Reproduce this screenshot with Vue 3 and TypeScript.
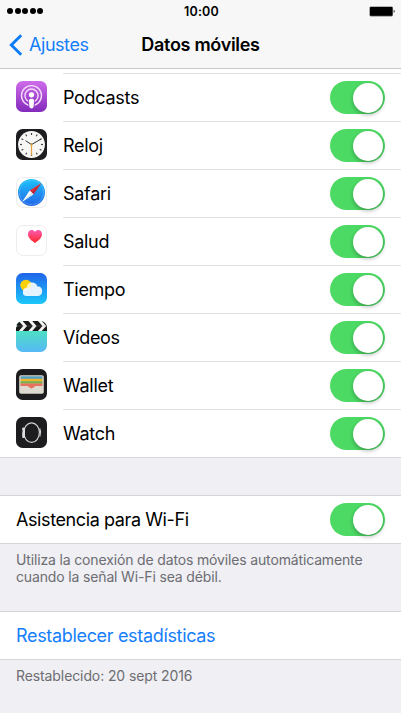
<template>
  <div class="settings-page">
    <header class="top-bar">
      <div class="status-bar">
        <div class="signal">
          <span v-for="n in 5" :key="n" class="signal-dot"></span>
        </div>
        <span class="clock">10:00</span>
        <svg class="battery" viewBox="0 0 27 11">
          <rect x="0.4" y="0.4" width="23.6" height="10" rx="1.4" fill="#777" />
          <rect x="1" y="1" width="22.4" height="8.8" rx="0.8" fill="#000" />
          <path d="M24.7 3.8c1.3.3 1.3 2.9 0 3.2z" fill="#222" />
        </svg>
      </div>
      <nav class="nav-bar">
        <button class="back-btn">
          <svg class="chevron" viewBox="0 0 14 22">
            <path d="M12.2 1.2 2.3 11l9.9 9.8" fill="none" stroke="#0b7cf5" stroke-width="2.9" />
          </svg>
          <span class="back-text">Ajustes</span>
        </button>
        <h1 class="title">Datos móviles</h1>
      </nav>
    </header>

    <!-- Apps -->
    <ul class="app-list">
      <li v-for="app in apps" :key="app.id" class="app-row">
        <svg class="app-icon" viewBox="0 0 31 31">
          <defs>
            <clipPath :id="`clip-${app.id}`">
              <rect width="31" height="31" rx="6.6" />
            </clipPath>
            <linearGradient :id="`grad-${app.id}`" x1="0" y1="0" x2="0" y2="1">
              <stop offset="0" :stop-color="app.from" />
              <stop offset="1" :stop-color="app.to" />
            </linearGradient>
          </defs>
          <g :clip-path="`url(#clip-${app.id})`">
            <rect width="31" height="31" :fill="`url(#grad-${app.id})`" />

            <template v-if="app.id === 'podcasts'">
              <circle cx="15.5" cy="14.6" r="10" fill="none" stroke="#f4dcfb" stroke-width="1.4" />
              <circle cx="15.5" cy="14.6" r="6.6" fill="none" stroke="#f4dcfb" stroke-width="1.4" />
              <path d="M12 17h7l-.4 9h-6.2z" fill="#9b41cc" />
              <circle cx="15.5" cy="13.8" r="2.6" fill="#fff" />
              <path d="M12.9 19.6c0-2.6 5.2-2.6 5.2 0l-.6 6.4c-.2 1.9-3.8 1.9-4 0z" fill="#fff" />
            </template>

            <template v-else-if="app.id === 'reloj'">
              <circle cx="15.5" cy="15.5" r="13.4" fill="#f7f7f5" />
              <rect
                v-for="n in 12"
                :key="n"
                x="14.9"
                y="4"
                width="1.2"
                height="2"
                fill="#444"
                :transform="`rotate(${n * 30} 15.5 15.5)`"
              />
              <path d="m9.6 11.7 5.9 3.9 9.8-5.7" fill="none" stroke="#333" stroke-width="1" />
              <path d="M15.5 14v12.4" stroke="#e3a143" stroke-width="1.2" />
              <circle cx="15.5" cy="15.5" r="1" fill="#dc9a3b" />
            </template>

            <template v-else-if="app.id === 'safari'">
              <circle cx="15.5" cy="15.4" r="13.5" fill="url(#safari-blue)" />
              <circle
                cx="15.5"
                cy="15.4"
                r="12"
                fill="none"
                stroke="#8ccbf8"
                stroke-width="1"
                stroke-dasharray="0.5 0.8"
              />
              <path d="M25.2 6.2 13.7 13.6l3.7 3.6z" fill="#e73038" />
              <path d="m25.2 6.2-9.6 9.2 1.8 1.8z" fill="#b9263a" />
              <path d="m6.2 24.8 7.5-11.2 3.7 3.6z" fill="#fff" />
              <path d="m6.2 24.8 9.4-9.4 1.8 1.8z" fill="#d8e7f5" />
            </template>

            <path
              v-else-if="app.id === 'salud'"
              d="M19 18.1c-3.6-2.6-7-5-7-8.8 0-4.8 5.3-5.4 7-2.3 1.7-3.1 7-2.5 7 2.3 0 3.8-3.4 6.2-7 8.8z"
              fill="url(#heart-pink)"
            />

            <template v-else-if="app.id === 'tiempo'">
              <circle cx="9.9" cy="12.3" r="5.6" fill="#fdd008" />
              <path
                d="M11 23a4 4 0 0 1-.3-8c.2-6.8 9.4-7.4 10.7-1.4 2.7-.6 4.8 1.5 4.8 4.6 0 3-2 4.8-4.6 4.8z"
                fill="#f1f9ff"
                fill-opacity="0.94"
              />
              <path d="M10.7 15c0-3 2.1-5.3 4.7-5.6 0 3.2-1.4 5.6-4.7 5.6z" fill="#fff0aa" />
            </template>

            <template v-else-if="app.id === 'videos'">
              <rect width="31" height="10" fill="#f5f5f3" />
              <path
                v-for="n in 4"
                :key="n"
                d="M-3 0h5.8l4.4 5-4.400 5H-3l4.400-5z"
                fill="#191919"
                :transform="`translate(${(n - 1) * 9.6} 0)`"
              />
              <path d="M0 5h31" stroke="#999" stroke-width="0.3" />
            </template>

            <template v-else-if="app.id === 'wallet'">
              <rect x="3.2" y="6.2" width="24.6" height="18.5" rx="1.8" fill="#dedad0" />
              <path d="M4.5 10V8.5c0-.8.4-1.2 1.2-1.2h19.600c.8 0 1.200.4 1.200 1.200V10z" fill="#5b9fbe" />
              <rect x="4.5" y="9.8" width="22" height="2.6" fill="#edb72d" />
              <rect x="4.5" y="12.2" width="22" height="2.5" fill="#79af47" />
              <path d="M4.5 14.5h22V17h-6.7c-1.9 0-2.1 2.5-4.3 2.5S13.1 17 11.2 17H4.5z" fill="#e87160" />
            </template>

            <template v-else>
              <ellipse cx="15.6" cy="15.6" rx="7.8" ry="9.8" fill="none" stroke="#cfcfcf" stroke-width="1.2" />
              <rect x="6.2" y="10.4" width="2.8" height="10.6" rx="1.1" fill="#dedede" />
              <path d="M6.4 12.8v2.6" stroke="#777" stroke-width="1" />
              <path d="M23.8 11.6c1 2.4 1 5.6 0 8" fill="none" stroke="#d5d5d5" stroke-width="1.2" />
            </template>
          </g>
          <rect
            v-if="app.light"
            x="0.5"
            y="0.5"
            width="30"
            height="30"
            rx="6.4"
            fill="none"
            stroke="#e9e9e9"
            stroke-width="0.8"
          />
        </svg>
        <div class="row-body">
          <span class="row-label">{{ app.name }}</span>
          <button class="switch" :class="{ on: app.enabled }" @click="app.enabled = !app.enabled">
            <span class="knob"></span>
          </button>
        </div>
      </li>
    </ul>

    <!-- Wi-Fi -->
    <section class="group wifi-group">
      <div class="group-row">
        <span class="row-label label-wifi">Asistencia para Wi-Fi</span>
        <button class="switch" :class="{ on: wifiAssist }" @click="wifiAssist = !wifiAssist">
          <span class="knob"></span>
        </button>
      </div>
      <p class="note">
        Utiliza la conexión de datos móviles automáticamente<br>
        cuando la señal Wi-Fi sea débil.
      </p>
    </section>

    <section class="group">
      <div class="group-row">
        <a class="row-label reset-link">Restablecer estadísticas</a>
      </div>
      <p class="note note-date">Restablecido: 20 sept 2016</p>
    </section>

    <svg class="shared-defs" width="0" height="0">
      <linearGradient id="safari-blue" x1="0" y1="0" x2="0" y2="1">
        <stop offset="0" stop-color="#1bc4fb" />
        <stop offset="1" stop-color="#2464e8" />
      </linearGradient>
      <linearGradient id="heart-pink" x1="0" y1="0" x2="0" y2="1">
        <stop offset="0" stop-color="#fc5bb0" />
        <stop offset="1" stop-color="#fb2525" />
      </linearGradient>
    </svg>
  </div>
</template>

<script setup lang="ts">
import { ref } from 'vue';

interface AppItem {
  id: string;
  name: string;
  from: string;
  to: string;
  light?: boolean;
  enabled: boolean;
}

const apps = ref<AppItem[]>([
  { id: 'podcasts', name: 'Podcasts', from: '#cf6ceb', to: '#832abb', enabled: true },
  { id: 'reloj', name: 'Reloj', from: '#1d1d1f', to: '#1d1d1f', enabled: true },
  { id: 'safari', name: 'Safari', from: '#ffffff', to: '#fcfcfc', light: true, enabled: true },
  { id: 'salud', name: 'Salud', from: '#ffffff', to: '#ffffff', light: true, enabled: true },
  { id: 'tiempo', name: 'Tiempo', from: '#2063e9', to: '#1bc8fb', enabled: true },
  { id: 'videos', name: 'Vídeos', from: '#4af0ac', to: '#56b9f6', enabled: true },
  { id: 'wallet', name: 'Wallet', from: '#1d1d1f', to: '#1d1d1f', enabled: true },
  { id: 'watch', name: 'Watch', from: '#1d1d1f', to: '#1d1d1f', enabled: true },
]);

const wifiAssist = ref(true);
</script>

<style>
body {
  margin: 0;
  background: #efeff4;
}
</style>

<style scoped>
.settings-page {
  height: 713px;
  overflow: hidden;
  background: #efeff4;
  color: #000;
  font-family: Inter, Roboto, "Liberation Sans", sans-serif;
}

.settings-page * {
  box-sizing: border-box;
}

button {
  padding: 0;
  border: none;
  background: none;
  font-family: inherit;
  cursor: pointer;
}

.top-bar {
  height: 69px;
  background: #f7f7f7;
  border-bottom: 1px solid #c8c8ca;
}

.status-bar {
  display: grid;
  grid-template-columns: 1fr auto 1fr;
  align-items: center;
  height: 22px;
  padding: 0 5px 0 7px;
}

.signal {
  display: flex;
  gap: 1.5px;
}

.signal-dot {
  width: 6px;
  height: 6px;
  border-radius: 50%;
  background: #000;
}

.clock {
  font-size: 12.5px;
  font-weight: 600;
  letter-spacing: 0.2px;
}

.battery {
  justify-self: end;
  width: 27px;
  height: 11px;
}

.nav-bar {
  display: grid;
  grid-template-columns: 1fr auto 1fr;
  align-items: center;
  height: 45px;
}

.back-btn {
  display: flex;
  align-items: center;
  gap: 6px;
  padding-left: 9px;
  color: #157efb;
  font-size: 18px;
}

.chevron {
  width: 14px;
  height: 22px;
}

.back-text {
  letter-spacing: -0.45px;
}

.title {
  margin: 0;
  font-size: 18px;
  font-weight: 600;
  letter-spacing: -0.3px;
}

.app-list {
  margin: 0;
  padding: 4px 0 0;
  list-style: none;
  background: #fff;
  border-bottom: 1px solid #d9d9dd;
}

.app-row {
  display: flex;
  gap: 16px;
  height: 48px;
  padding-left: 16px;
}

.app-icon {
  flex: none;
  width: 31px;
  height: 31px;
  margin-top: 8px;
}

.row-body {
  display: flex;
  flex: 1;
  justify-content: space-between;
  align-items: center;
  border-top: 1px solid #e1e1e3;
  padding-right: 16px;
}

.row-label {
  font-size: 18px;
  letter-spacing: -0.3px;
  white-space: nowrap;
}

.switch {
  flex: none;
  width: 55px;
  height: 33px;
  padding: 1.5px;
  border-radius: 17px;
  background: #e5e5ea;
}

.switch.on {
  background: #4cd964;
}

.knob {
  display: block;
  width: 30px;
  height: 30px;
  border-radius: 50%;
  background: #fff;
  box-shadow: 0 2px 4px rgba(0, 0, 0, 0.28);
}

.switch.on .knob {
  margin-left: 21.5px;
}

.wifi-group {
  height: 116px;
}

.app-list + .group {
  margin-top: 37px;
}

.group-row {
  display: flex;
  justify-content: space-between;
  align-items: center;
  height: 49px;
  padding: 0 16px;
  background: #fff;
  border-top: 1px solid #d5d5d9;
  border-bottom: 1px solid #d5d5d9;
}

.label-wifi {
  letter-spacing: -0.4px;
}

.reset-link {
  color: #157efb;
  letter-spacing: -0.33px;
}

.note {
  margin: 7px 16px 0;
  color: #6d6d72;
  font-size: 14px;
  line-height: 17px;
  letter-spacing: -0.15px;
  white-space: nowrap;
}

.note-date {
  letter-spacing: -0.1px;
}

.shared-defs {
  display: block;
}
</style>
